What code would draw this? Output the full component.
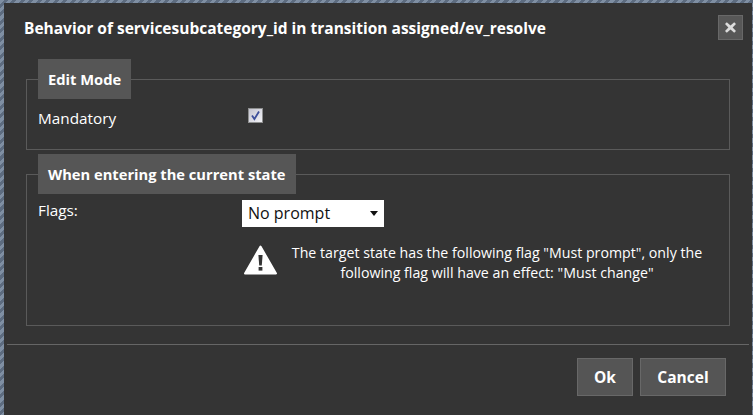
<style>
  :global(body) {
    margin: 0;
    background: repeating-linear-gradient(135deg, #7f8fa3 0 3px, #5d6c80 3px 6px);
    font-family: "Open Sans", "Noto Sans", sans-serif;
    color: #fff;
    overflow: hidden;
  }
  .dialog {
    box-sizing: border-box;
    width: 748px;
    height: 412px;
    margin: 3px 0 0 4px;
    background: #343434;
    display: flex;
    flex-direction: column;
  }
  .head {
    height: 54px;
    display: flex;
    justify-content: space-between;
    padding: 12px 9px 0 20px;
    box-sizing: border-box;
  }
  h1 {
    margin: 0;
    padding-top: 1px;
    font-size: 15.5px;
    line-height: 24px;
    font-weight: 700;
    white-space: nowrap;
  }
  .close {
    box-sizing: border-box;
    width: 25px;
    height: 25px;
    margin-top: 0;
    background: #575757;
    border: 1px solid #686868;
    padding: 0;
    display: flex;
    align-items: center;
    justify-content: center;
  }
  .body {
    padding: 2px 22px 0;
    display: flex;
    flex-direction: column;
    gap: 4px;
  }
  fieldset {
    margin: 0;
    padding: 0 11px;
    border: 1px solid #5a5a5a;
    box-sizing: border-box;
    min-width: 0;
  }
  .f1 { height: 91px; }
  .f2 { height: 172px; }
  legend {
    background: #565656;
    padding: 0 10px;
    height: 40px;
    line-height: 40px;
    font-size: 14.7px;
    font-weight: 700;
    box-sizing: border-box;
  }
  .row {
    display: grid;
    grid-template-columns: 204px 1fr;
    font-size: 15.3px;
    line-height: 20px;
  }
  .f1 .row { padding-top: 9px; }
  .f2 .row { padding-top: 6px; }
  .check {
    box-sizing: border-box;
    width: 15px;
    height: 15px;
    margin: 0 0 0 6px;
    background: linear-gradient(135deg, #c4c4d0, #f2f2f6);
    border: 1px solid #8e8f8f;
    display: flex;
  }
  .select {
    box-sizing: border-box;
    width: 142px;
    height: 27px;
    background: #fff;
    color: #111;
    font-size: 16px;
    line-height: 27px;
    padding-left: 6px;
    display: flex;
    justify-content: space-between;
    align-items: center;
  }
  .caret {
    width: 0;
    height: 0;
    border: 4.5px solid transparent;
    border-top: 5px solid #111;
    border-bottom: 0;
    margin-right: 6px;
  }
  .warn {
    display: flex;
    align-items: flex-start;
    margin: 16px 0 0 2px;
    width: 473px;
  }
  .warn svg { flex: none; margin-top: 2px; }
  .warn p {
    margin: 0;
    flex: 1;
    text-align: center;
    font-size: 14.2px;
    line-height: 20px;
  }
  .rule {
    height: 1px;
    background: #666;
    margin: 18px 3px 0 3px;
  }
  .foot {
    display: flex;
    justify-content: flex-end;
    gap: 7px;
    padding: 13px 26px 0 0;
  }
  button.btn {
    box-sizing: border-box;
    height: 38px;
    background: #555;
    border: 1px solid #686868;
    color: #fff;
    font: 700 15.5px "Open Sans", "Noto Sans", sans-serif;
    padding: 0;
  }
  .ok { width: 56px; }
  .cancel { width: 86px; }
</style>

<div class="dialog">
  <div class="head">
    <h1>Behavior of servicesubcategory_id in transition assigned/ev_resolve</h1>
    <button class="close" aria-label="Close">
      <svg width="13" height="13" viewBox="0 0 13 13"><path d="M2.8 1.2 6.5 4.6 10.2 1.2 12 3 8.6 6.5 12 10 10.2 11.8 6.5 8.4 2.8 11.8 1 10 4.4 6.5 1 3Z" fill="#dcdcdc"/></svg>
    </button>
  </div>
  <div class="body">
    <fieldset class="f1">
      <legend>Edit Mode</legend>
      <div class="row">
        <span>Mandatory</span>
        <span class="check">
          <svg width="13" height="13" viewBox="0 0 13 13"><path d="M3 6.5 5.4 10 10 2.5" fill="none" stroke="#3d4f9a" stroke-width="1.8"/></svg>
        </span>
      </div>
    </fieldset>
    <fieldset class="f2">
      <legend>When entering the current state</legend>
      <div class="row">
        <span>Flags:</span>
        <div>
          <div class="select"><span>No prompt</span><span class="caret"></span></div>
          <div class="warn">
            <svg width="33" height="30" viewBox="0 0 33 30">
              <path d="M16.5 1.5 32 28.5H1Z" fill="#fff" stroke="#fff" stroke-width="2" stroke-linejoin="round"/>
              <path d="M14.4 10h4.2l-.8 10.5h-2.6Z" fill="#343434"/>
              <rect x="14.6" y="22" width="3.8" height="3.6" fill="#343434"/>
            </svg>
            <p>The target state has the following flag "Must prompt", only the following flag will have an effect: "Must change"</p>
          </div>
        </div>
      </div>
    </fieldset>
  </div>
  <div class="rule"></div>
  <div class="foot">
    <button class="btn ok">Ok</button>
    <button class="btn cancel">Cancel</button>
  </div>
</div>
